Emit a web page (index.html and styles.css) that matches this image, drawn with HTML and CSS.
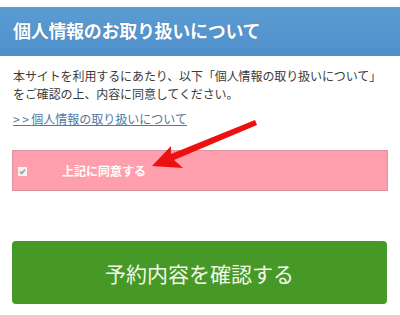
FILE: index.html
```html
<!DOCTYPE html>
<html lang="ja">
<head>
<meta charset="utf-8">
<link rel="stylesheet" href="styles.css">
</head>
<body>
<div class="page">
  <h1 class="title">個人情報のお取り扱いについて</h1>
  <div class="content">
    <p class="lead">本サイトを利用するにあたり、以下「個人情報の取り扱いについて」をご確認の上、内容に同意してください。</p>
    <a class="policy-link" href="#"><span class="chev">&gt;&gt;</span>個人情報の取り扱いについて</a>
    <label class="agree">
      <span class="check"><svg viewBox="0 0 9 9" width="9" height="9"><path d="M2 4.6 L3.8 6.4 L7 2.6" fill="none" stroke="#9a9a9a" stroke-width="1.6"/></svg></span>
      <span class="agree-text">上記に同意する</span>
    </label>
    <button class="confirm">予約内容を確認する</button>
  </div>
  <svg class="arrow" width="400" height="315" viewBox="0 0 400 315">
    <polygon points="152,166 171,146 171,154 255,120 257,125 174,160 183,168" fill="#ee1010"/>
  </svg>
</div>
</body>
</html>
```
FILE: styles.css
```css
html, body {
  margin: 0;
  padding: 0;
  background: #ffffff;
}
body {
  font-family: "Noto Sans CJK JP", "Noto Sans", sans-serif;
  color: #333333;
}
.page {
  position: relative;
  width: 400px;
  height: 315px;
  overflow: hidden;
}
.title {
  margin: 7px 0 0;
  height: 49px;
  line-height: 47px;
  padding-left: 13px;
  font-size: 18px;
  font-weight: bold;
  color: #ffffff;
  background: linear-gradient(#5c9cd4, #4f90cb);
  text-shadow: 0 0 1px rgba(0, 0, 0, 0.25);
  letter-spacing: -0.3px;
}
.content {
  padding: 0 12px;
  display: flex;
  flex-direction: column;
}
.lead {
  margin: 11px 0 0 1px;
  font-size: 12px;
  line-height: 18px;
  color: #3a3a3a;
  letter-spacing: -0.1px;
}
.policy-link {
  margin: 7px 0 0 1px;
  align-self: flex-start;
  font-size: 12px;
  line-height: 18px;
  color: #52789e;
  text-decoration: underline;
}
.chev {
  letter-spacing: 2.5px;
}
.agree {
  margin-top: 22px;
  height: 39px;
  border: 1px solid #d8959f;
  background: #ff9fae;
  display: flex;
  align-items: center;
  padding-left: 5px;
  gap: 35px;
}
.check {
  width: 9px;
  height: 9px;
  background: #f6f2f3;
  display: flex;
  margin-top: 1px;
}
.agree-text {
  font-size: 12px;
  font-weight: bold;
  color: #ffffff;
}
.confirm {
  margin-top: 50px;
  width: 375px;
  height: 63px;
  border: none;
  border-radius: 4px;
  background: #469926;
  color: #f3f8e6;
  font-family: "Noto Sans CJK JP", "Noto Sans", sans-serif;
  font-size: 21px;
  padding: 0;
}
.arrow {
  position: absolute;
  left: 0;
  top: 0;
  pointer-events: none;
}
```
